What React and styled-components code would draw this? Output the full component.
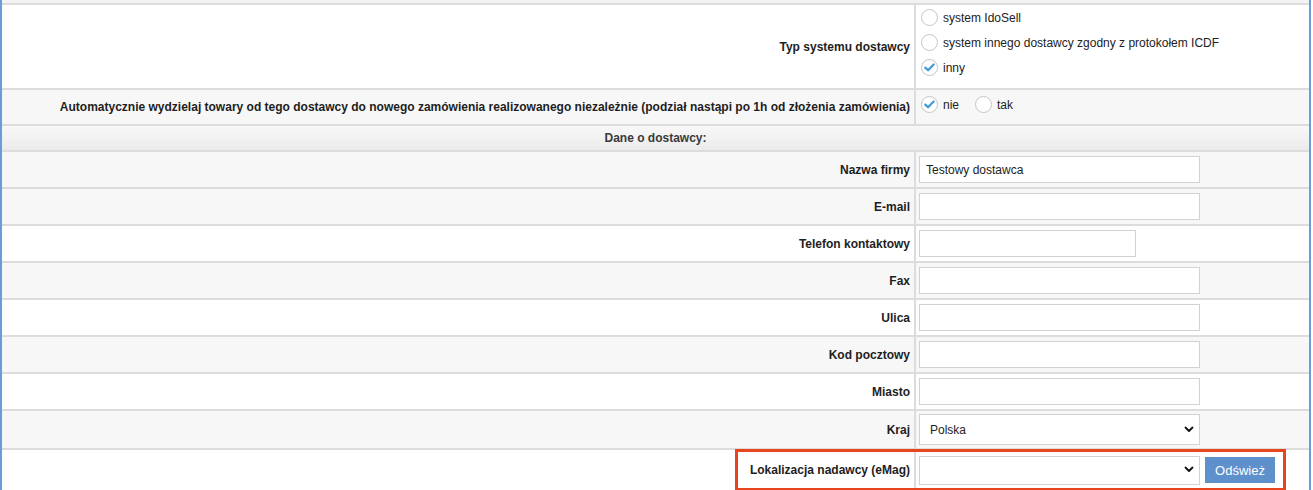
import React from "react";
import styled, { createGlobalStyle } from "styled-components";

const Global = createGlobalStyle`
  html, body { margin: 0; padding: 0; background: #fff; }
  body { font-family: "Liberation Sans", Arial, Helvetica, sans-serif; font-size: 12px; color: #222; }
  * { box-sizing: border-box; }
`;

const Frame = styled.div`
  width: 1313px;
  padding-right: 2px;
  background: #fff;
`;

const Table = styled.div`
  display: grid;
  grid-template-columns: 912px 393px;
  gap: 2px;
  background: #dcdcdc;
  border-left: 2px solid #6d9bd3;
  border-right: 2px solid #6d9bd3;
`;

const Strip = styled.div`
  grid-column: 1 / -1;
  height: 3px;
  background: #f3f3f3;
`;

const Label = styled.div`
  background: ${(p) => (p.$gray ? "#f7f7f7" : "#fff")};
  min-height: ${(p) => p.$h || 35}px;
  display: flex;
  align-items: center;
  justify-content: flex-end;
  padding-right: 4px;
  font-weight: bold;
  font-size: 12px;
  color: #1e1e1e;
  white-space: nowrap;
`;

const Value = styled.div`
  background: ${(p) => (p.$gray ? "#f7f7f7" : "#fff")};
  min-height: ${(p) => p.$h || 35}px;
  display: flex;
  flex-direction: ${(p) => (p.$column ? "column" : "row")};
  align-items: ${(p) => (p.$column ? "flex-start" : "center")};
  justify-content: flex-start;
  padding: ${(p) => p.$pad || "0 3px"};
  position: relative;
`;

const Header = styled.div`
  grid-column: 1 / -1;
  height: 24px;
  background: linear-gradient(#f8f8f8, #ebebeb);
  display: flex;
  align-items: center;
  justify-content: center;
  font-weight: bold;
  font-size: 12px;
  color: #3a3a3a;
`;

const RadioLine = styled.label`
  display: flex;
  align-items: center;
  height: 25px;
  font-size: 12px;
  color: #222;
  margin-right: ${(p) => p.$mr || 0}px;
`;

const Circle = styled.span`
  width: 17px;
  height: 17px;
  border-radius: 50%;
  border: 1px solid #c4c4c4;
  background: #fff;
  margin: 0 5px 0 2px;
  display: inline-flex;
  align-items: center;
  justify-content: center;
  flex: none;
`;

const TextInput = styled.input`
  width: ${(p) => p.$w || 281}px;
  height: 27px;
  border: 1px solid #d2d2d2;
  background: #fff;
  padding: 0 6px;
  font-family: inherit;
  font-size: 12px;
  color: #222;
  outline: none;
`;

const SelectWrap = styled.div`
  position: relative;
  width: 281px;
  height: ${(p) => p.$h || 31}px;
`;

const Select = styled.select`
  appearance: none;
  -webkit-appearance: none;
  width: 100%;
  height: 100%;
  border: 1px solid #d2d2d2;
  background: #fff;
  padding: 0 10px;
  font-family: inherit;
  font-size: 12px;
  color: #222;
  outline: none;
`;

const Chevron = styled.svg`
  position: absolute;
  right: 6px;
  top: 50%;
  margin-top: -4px;
  pointer-events: none;
`;

const Button = styled.button`
  margin-left: 5px;
  width: 70px;
  height: 26px;
  border: none;
  background: #5e90cc;
  color: #fff;
  font-family: inherit;
  font-size: 13px;
  padding: 0;
`;

const EmagRow = styled.div`
  grid-column: 1 / -1;
  display: grid;
  grid-template-columns: 912px 393px;
  gap: 2px;
  position: relative;
`;

const Highlight = styled.div`
  position: absolute;
  left: 733px;
  top: -1px;
  width: 551px;
  height: 42px;
  border: 3px solid #e8441e;
  pointer-events: none;
`;

function Radio({ label, checked, mr }) {
  return (
    <RadioLine $mr={mr}>
      <Circle>
        {checked && (
          <svg width="11" height="9" viewBox="0 0 11 9">
            <path d="M1.3 4.6 L4.1 7.3 L9.6 1.5" fill="none" stroke="#3f9ad9" strokeWidth="2.2" strokeLinecap="round" strokeLinejoin="round" />
          </svg>
        )}
      </Circle>
      {label}
    </RadioLine>
  );
}

function Arrow() {
  return (
    <Chevron width="10" height="7" viewBox="0 0 10 7">
      <path d="M1.5 1.5 L5 5 L8.5 1.5" fill="none" stroke="#111" strokeWidth="1.8" strokeLinecap="round" strokeLinejoin="round" />
    </Chevron>
  );
}

const fields = [
  { label: "Nazwa firmy", value: "Testowy dostawca", gray: true },
  { label: "E-mail", gray: true },
  { label: "Telefon kontaktowy", w: 217 },
  { label: "Fax", gray: true },
  { label: "Ulica" },
  { label: "Kod pocztowy", gray: true },
  { label: "Miasto" },
];

export default function App() {
  return (
    <Frame>
      <Global />
      <Table>
        <Strip />
        <Label $h={83}>Typ systemu dostawcy</Label>
        <Value $h={83} $column $pad="0 3px">
          <Radio label="system IdoSell" />
          <Radio label="system innego dostawcy zgodny z protokołem ICDF" />
          <Radio label="inny" checked />
        </Value>
        <Label $gray $h={34}>
          Automatycznie wydzielaj towary od tego dostawcy do nowego zamówienia realizowanego niezależnie (podział nastąpi po 1h od złożenia zamówienia)
        </Label>
        <Value $gray $h={34} $pad="0 3px 5px">
          <Radio label="nie" checked mr={14} />
          <Radio label="tak" />
        </Value>
        <Header>Dane o dostawcy:</Header>
        {fields.map((f) => (
          <React.Fragment key={f.label}>
            <Label $gray={f.gray}>{f.label}</Label>
            <Value $gray={f.gray}>
              <TextInput $w={f.w} defaultValue={f.value || ""} />
            </Value>
          </React.Fragment>
        ))}
        <Label $gray $h={37}>Kraj</Label>
        <Value $gray $h={37}>
          <SelectWrap>
            <Select defaultValue="pl">
              <option value="pl">Polska</option>
            </Select>
            <Arrow />
          </SelectWrap>
        </Value>
        <EmagRow>
          <Label $h={40}>Lokalizacja nadawcy (eMag)</Label>
          <Value $h={40} $pad="0 3px">
            <SelectWrap $h={29}>
              <Select defaultValue="">
                <option value=""></option>
              </Select>
              <Arrow />
            </SelectWrap>
            <Button>Odśwież</Button>
          </Value>
          <Highlight />
        </EmagRow>
      </Table>
    </Frame>
  );
}
